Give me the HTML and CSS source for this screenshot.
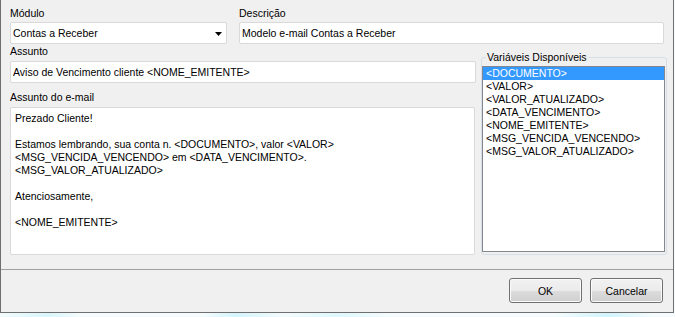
FILE: index.html
```html
<!DOCTYPE html>
<html lang="pt">
<head>
<meta charset="utf-8">
<title>Modelo e-mail</title>
<link rel="stylesheet" href="styles.css">
</head>
<body>
<div class="window">
  <div class="main">
    <div class="row1">
      <div class="field modulo">
        <div class="lbl">Módulo</div>
        <div class="combo">
          <span>Contas a Receber</span>
          <svg class="arrow" width="7" height="4" viewBox="0 0 7 4"><path d="M0 0H7L3.5 4Z" fill="#000"/></svg>
        </div>
      </div>
      <div class="field desc">
        <div class="lbl">Descrição</div>
        <div class="input">Modelo e-mail Contas a Receber</div>
      </div>
    </div>
    <div class="row2">
      <div class="leftcol">
        <div class="lbl lbl-a">Assunto</div>
        <div class="input subject">Aviso de Vencimento cliente &lt;NOME_EMITENTE&gt;</div>
        <div class="lbl lbl-m">Assunto do e-mail</div>
<div class="memo">Prezado Cliente!

Estamos lembrando, sua conta n. &lt;DOCUMENTO&gt;, valor &lt;VALOR&gt;
&lt;MSG_VENCIDA_VENCENDO&gt; em &lt;DATA_VENCIMENTO&gt;.
&lt;MSG_VALOR_ATUALIZADO&gt;

Atenciosamente,

&lt;NOME_EMITENTE&gt;</div>
      </div>
      <fieldset class="group">
        <legend>Variáveis Disponíveis</legend>
        <ul class="list">
          <li class="sel">&lt;DOCUMENTO&gt;</li>
          <li>&lt;VALOR&gt;</li>
          <li>&lt;VALOR_ATUALIZADO&gt;</li>
          <li>&lt;DATA_VENCIMENTO&gt;</li>
          <li>&lt;NOME_EMITENTE&gt;</li>
          <li>&lt;MSG_VENCIDA_VENCENDO&gt;</li>
          <li>&lt;MSG_VALOR_ATUALIZADO&gt;</li>
        </ul>
      </fieldset>
    </div>
  </div>
  <div class="footer">
    <button class="btn">OK</button>
    <button class="btn">Cancelar</button>
  </div>
</div>
</body>
</html>
```

FILE: styles.css
```css
* { box-sizing: border-box; }
html, body { margin: 0; padding: 0; }
body {
  width: 675px;
  height: 317px;
  overflow: hidden;
  background: linear-gradient(90deg, #f4fbfd 0%, #d9f6fc 7%, #f6fcfe 12%, #f6fcfe 30%, #d4f5fc 35%, #f4fbfd 42%, #dff8fd 50%, #f6fcfe 58%, #f6fcfe 82%, #d2f4fc 90%, #f6fcfe 97%);
  font-family: "Liberation Sans", Arial, sans-serif;
  font-size: 10.5px;
  color: #000;
}
.window {
  width: 674px;
  height: 313px;
  background: #f0f0f0;
  border-left: 1px solid #6f6f6f;
  border-right: 1px solid #6f6f6f;
  border-bottom: 1px solid #6f6f6f;
  display: flex;
  flex-direction: column;
}
.main {
  height: 269px;
  flex: none;
  padding: 7px 0 0 9px;
}
.lbl {
  height: 13px;
  line-height: 13px;
  margin-bottom: 2px;
  white-space: nowrap;
}
.row1 { display: flex; gap: 12px; }
.modulo { width: 217px; }
.desc { width: 425px; }
.input, .combo {
  height: 22px;
  border: 1px solid #d9d9d9;
  border-radius: 2px;
  background: #fff;
  padding: 0 2px;
  line-height: 20px;
  white-space: nowrap;
}
.combo {
  display: flex;
  align-items: center;
  justify-content: space-between;
  padding-right: 4px;
}
.arrow { display: block; margin-top: 1px; }
.row2 { display: flex; align-items: flex-start; }
.leftcol { width: 466px; }
.lbl-a { margin-top: 1px; margin-bottom: 3px; }
.lbl-m { margin-top: 8px; margin-bottom: 3px; }
.memo {
  width: 465px;
  height: 148px;
  border: 1px solid #d9d9d9;
  border-radius: 2px;
  background: #fff;
  padding: 4px 4px;
  line-height: 13px;
  white-space: pre;
}
.group {
  margin: 7px 0 0 5px;
  width: 186px;
  min-width: 0;
  border: 1px solid #d5dfe5;
  border-radius: 3px;
  padding: 0 1px 2px 0;
}
.group legend {
  padding: 0 1px;
  margin-left: 4px;
  line-height: 13px;
}
.list {
  margin: 2px 0 0 0;
  padding: 0;
  list-style: none;
  width: 183px;
  height: 186px;
  border: 1px solid #828790;
  background: #fff;
}
.list li {
  height: 13px;
  line-height: 13px;
  padding-left: 3px;
  white-space: nowrap;
}
.list li.sel { background: #3399ff; color: #fff; }
.footer {
  flex: 1;
  border-top: 1px solid #a0a0a0;
  display: flex;
  justify-content: flex-end;
  align-items: flex-start;
  gap: 8px;
  padding: 8px 10px 0 0;
}
.btn {
  width: 73px;
  height: 25px;
  margin: 0;
  padding: 0;
  border: 1px solid #707070;
  border-radius: 3px;
  background: linear-gradient(#f2f2f2 0%, #ebebeb 50%, #dddddd 51%, #cfcfcf 100%);
  box-shadow: inset 0 0 0 1px #fbfbfb;
  font: inherit;
  color: #000;
}
```
